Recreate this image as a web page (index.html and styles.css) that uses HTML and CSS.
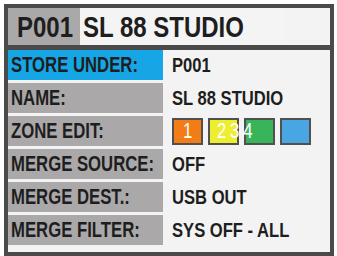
FILE: index.html
```html
<!DOCTYPE html>
<html>
<head>
<meta charset="utf-8">
<link rel="stylesheet" href="styles.css">
</head>
<body>
<div class="frame">
  <div class="header">
    <div class="prog"><span class="t">P001</span></div>
    <div class="title"><span class="t">SL 88 STUDIO</span></div>
  </div>
  <div class="sep"></div>
  <div class="grid">
    <div class="label active"><span class="t">STORE UNDER:</span></div><div class="value"><span class="t">P001</span></div>
    <div class="label"><span class="t">NAME:</span></div><div class="value"><span class="t">SL 88 STUDIO</span></div>
    <div class="label"><span class="t">ZONE EDIT:</span></div>
    <div class="value zones">
      <div class="zone z1"><span class="num">1</span></div>
      <div class="zone z2"><span class="num multi">234</span></div>
      <div class="zone z3"></div>
      <div class="zone z4"></div>
    </div>
    <div class="label"><span class="t">MERGE SOURCE:</span></div><div class="value"><span class="t">OFF</span></div>
    <div class="label"><span class="t">MERGE DEST.:</span></div><div class="value"><span class="t">USB OUT</span></div>
    <div class="label"><span class="t">MERGE FILTER:</span></div><div class="value"><span class="t">SYS OFF - ALL</span></div>
  </div>
</div>
</body>
</html>
```
FILE: styles.css
```css
html, body {
  margin: 0;
  padding: 0;
  background: #ffffff;
}
body {
  font-family: "Liberation Sans", Arial, sans-serif;
  font-weight: bold;
  color: #1e1e1e;
}
.t {
  display: inline-block;
  transform-origin: left center;
  white-space: nowrap;
}
.frame {
  margin: 4px 0 0 4px;
  width: 330px;
  height: 252px;
  box-sizing: border-box;
  border: 4px solid #4a4a4a;
  background: #f3f3f3;
  display: flex;
  flex-direction: column;
}
.header {
  height: 37px;
  display: flex;
  align-items: center;
  font-size: 30px;
  line-height: 37px;
}
.header .t { transform: scaleX(0.8); }
.prog {
  width: 72px;
  height: 37px;
  box-sizing: border-box;
  padding-left: 9px;
  background: #aaa8a9;
  overflow: hidden;
}
.title {
  padding-left: 3px;
  background: #f4f4f4;
}
.sep {
  height: 5px;
  background: #4a4a4a;
}
.grid {
  display: grid;
  grid-template-columns: 155px 1fr;
  grid-auto-rows: 30px;
  row-gap: 3px;
  column-gap: 2px;
}
.label {
  background: #aaa8a9;
  padding-left: 3px;
  display: flex;
  align-items: center;
  white-space: nowrap;
  overflow: hidden;
  font-size: 22px;
}
.label .t { transform: scaleX(0.76); }
.label.active {
  background: #16a6e6;
}
.value {
  padding-left: 7px;
  display: flex;
  align-items: center;
  font-size: 21px;
  white-space: nowrap;
  overflow: hidden;
}
.value .t { transform: scaleX(0.79); }
.zones {
  gap: 5px;
  overflow: visible;
}
.zone {
  width: 31px;
  height: 27px;
  box-sizing: border-box;
  border: 2px solid #505050;
  display: flex;
  align-items: center;
}
.z1 { background: #f27c16; }
.z2 { background: #eeee30; }
.z3 { background: #38b45a; }
.z4 { background: #4aa6e2; }
.num {
  color: #ffffff;
  font-weight: normal;
  font-size: 22px;
  position: relative;
  z-index: 1;
  display: inline-block;
  transform: scaleX(0.76);
  transform-origin: left center;
  white-space: nowrap;
}
.z1 .num { margin-left: 9px; }
.z2 .num { margin-left: 7px; letter-spacing: 5px; }
```
